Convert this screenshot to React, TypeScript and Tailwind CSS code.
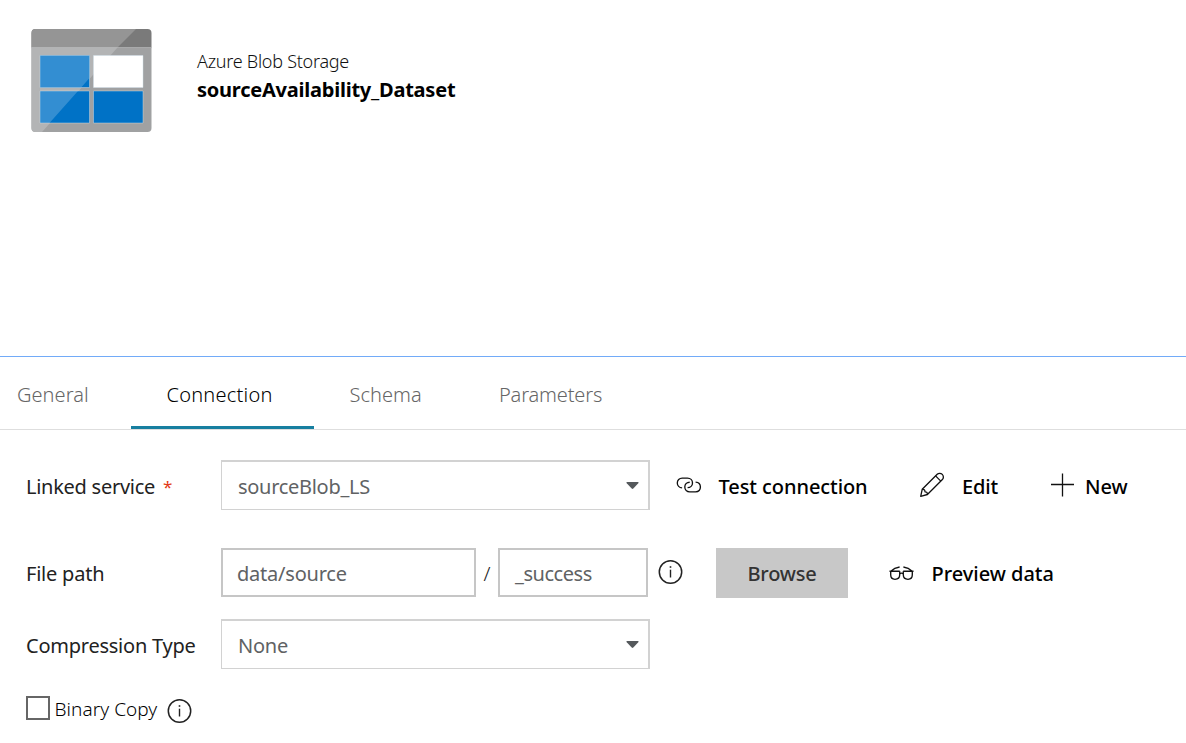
import type { ReactNode } from "react";

function StorageIcon() {
  return (
    <svg className="block h-[104px] w-[121px]" viewBox="0 0 121 104" fill="none">
      <path d="M0.5 18V4a4 4 0 0 1 4-4h112a4 4 0 0 1 4 4v14z" fill="#7a7a7a" />
      <path d="M0.5 18h120v81a4 4 0 0 1-4 4h-112a4 4 0 0 1-4-4z" fill="#a0a1a2" />
      <path d="M0.5 18.6h120" stroke="#abacad" />
      <path d="M0.5 18V4a4 4 0 0 1 4-4H105L87 18z" fill="#959595" />
      <path d="M0.5 18H87L11 103H4.5a4 4 0 0 1-4-4z" fill="#b3b4b5" />
      <g transform="translate(0 -.5)">
        <path d="M9 27h49.5v32H9zM9 62.500h49.500v32H9zM62.500 62.500h49.500v32h-49.500z" fill="#0072c6" />
        <path d="M62.500 27h49.500v32h-49.500z" fill="#fff" />
        <path d="M9 27h49.500v22.500L50.200 59H9zM9 62.500h38L18.500 94.500H9z" fill="#338ed2" />
        <path d="M9 27h49.500v32H9zM9 62.500h49.500v32H9zM62.500 62.500h49.500v32h-49.500zM62.500 27h49.500v32h-49.500z" stroke="#cfdde8" strokeOpacity=".45" />
      </g>
    </svg>
  );
}

function LinkIcon() {
  return (
    <svg className="block h-[18px] w-[26px]" viewBox="0 0 26 18" fill="none" stroke="#111" strokeWidth="1.35">
      <path d="M6.100 11.900C3.300 11.600 1.300 9.400 1.300 6.900C1.300 4.100 3.300 2.100 6.200 2.100H11.500C14.400 2.100 16.500 4.100 16.500 6.900C16.500 9.600 14.400 11.600 11.600 11.600" />
      <path d="M19.600 6.200C22.400 6.400 24.400 8.400 24.400 11C24.400 13.800 22.400 15.800 19.500 15.800H13.700C10.900 15.800 8.800 13.800 8.800 11C8.800 8.300 10.900 6.200 13.700 6.200" />
    </svg>
  );
}

function PencilIcon() {
  return (
    <svg className="block h-[26px] w-[26px]" viewBox="0 0 26 26" fill="none" stroke="#111" strokeWidth="1.3" strokeLinejoin="round">
      <path d="M.700 24.300L2.200 17.300L17.200 2.300C18.500 1 20.900 1 22.300 2.400C23.700 3.800 23.700 6.200 22.400 7.500L7.400 22.500Z" />
      <path d="M2.200 17.300C4 17.200 5 18 5 19.800C6.600 19.700 7.500 20.700 7.400 22.500M15.600 3.900L20.800 9.100" />
    </svg>
  );
}

function PlusIcon() {
  return (
    <svg className="block h-[24px] w-[24px]" viewBox="0 0 24 24" stroke="#111" strokeWidth="1.3">
      <path d="M11.500 .500V23.500M0 11.500H23" />
    </svg>
  );
}

function GlassesIcon() {
  return (
    <svg className="block h-[15px] w-[25px]" viewBox="0 0 25 15" fill="none" stroke="#111" strokeWidth="1.350">
      <path d="M.500 5.200H10.800M14.200 5.200H24.500M1.800 5.200C4.400 2.700 7 1.500 10.600 1M23.200 5.200C20.600 2.700 18 1.500 14.400 1" />
      <path d="M1.700 5.200V8.800C1.700 11.500 3.400 13.300 6 13.300C8.700 13.300 10.700 11.500 10.700 8.800V5.200M14.300 5.200V8.800C14.300 11.500 16.300 13.300 19 13.300C21.600 13.300 23.300 11.500 23.300 8.800V5.200M10.700 8C11.500 6.800 13.500 6.800 14.300 8" />
    </svg>
  );
}

function InfoIcon() {
  return (
    <svg className="block h-[25px] w-[25px]" viewBox="0 0 25 25" fill="none" stroke="#222">
      <circle cx="12.500" cy="12" r="11.200" strokeWidth="1.500" />
      <path d="M12.500 9.700V17.500" strokeWidth="1.400" />
      <path d="M12.500 6.200V7.800" strokeWidth="1.600" />
    </svg>
  );
}

function Caret() {
  return (
    <svg className="block h-[7px] w-[13px]" viewBox="0 0 13 7">
      <path d="M1 0H12Q13 .500 12.300 1.300L7.300 6.600Q6.500 7.200 5.700 6.600L.700 1.300Q0 .500 1 0Z" fill="#55595c" />
    </svg>
  );
}

function Select({ children }: { children: ReactNode }) {
  return (
    <div className="flex h-[50px] w-[429px] items-center justify-between border-t-2 border-r-2 border-b border-l border-[#d2d2d2] pr-[9px] pl-4 text-[#606264]">
      {children}
      <Caret />
    </div>
  );
}

export default function App() {
  return (
    <main className="flex h-[743px] w-[1186px] flex-col overflow-hidden bg-white font-['Noto_Sans',sans-serif] text-[20px] leading-7 whitespace-nowrap text-[#222]">
      <header className="flex h-[356px] items-start pt-[29px] pl-[31px]">
        <StorageIcon />
        <div className="ml-[45px] flex flex-col pt-[18px]">
          <span className="text-[18px] font-light tracking-[-0.26px] text-[#111]">Azure Blob Storage</span>
          <span className="mt-px font-bold tracking-[-0.23px] text-black">sourceAvailability_Dataset</span>
        </div>
      </header>

      <nav className="flex h-[74px] border-t border-t-[#72abf8] font-light text-[#666]">
        <div className="flex w-full border-b border-b-[#dedede]">
          <span className="w-[131px] pt-6 pl-[17px] tracking-[0.05px]">General</span>
          <span className="h-[72px] w-[183px] border-b-[3px] border-b-[#177fa0] pt-6 pl-[35.5px] tracking-[0.22px] text-black">Connection</span>
          <span className="w-[150px] pt-6 pl-[35.5px] tracking-[0.05px]">Schema</span>
          <span className="pt-6 pl-[35px] tracking-[-0.16px]">Parameters</span>
        </div>
      </nav>

      <section className="flex flex-col pt-[30px] pl-[26px]">
        <div className="flex h-[50px] items-center">
          <span className="flex w-[195px] pt-[3px] tracking-[-0.27px]">
            Linked service <span className="ml-[8px] text-[17px] text-[#e23a15]">*</span>
          </span>
          <Select><span className="pt-[3px] tracking-[-0.29px]">sourceBlob_LS</span></Select>
          <span className="ml-[26px] flex w-[244px] items-center font-medium text-black">
            <LinkIcon />
            <span className="ml-[16.5px] pt-[3px] tracking-[-0.07px]">Test connection</span>
          </span>
          <span className="flex w-[131px] items-center font-medium text-black">
            <PencilIcon />
            <span className="ml-4 pt-[3px] tracking-[-0.15px]">Edit</span>
          </span>
          <span className="flex items-center font-medium text-black">
            <PlusIcon />
            <span className="ml-2.5 pt-[3px] tracking-[0px]">New</span>
          </span>
        </div>

        <div className="mt-[38px] flex h-[50px] items-start">
          <span className="w-[195px] pt-3 tracking-[-0.22px]">File path</span>
          <div className="h-[49px] w-[255px] border-2 border-[#c6c6c6] pt-2.5 pl-3.5 tracking-[-0.22px] text-[#606264]">data/source</div>
          <span className="w-[22px] pt-3 text-center font-light">/</span>
          <div className="h-[49px] w-[150px] border-2 border-[#c6c6c6] pt-2.5 pl-[15px] tracking-[-0.45px] text-[#606264]">_success</div>
          <span className="mt-3 ml-2.5"><InfoIcon /></span>
          <button className="ml-[33px] h-[50px] w-[132px] bg-[#c8c8c8] pt-0.5 font-medium tracking-[-0.2px] text-[#333]">Browse</button>
          <span className="ml-[41px] flex h-[50px] items-center font-medium text-black">
            <GlassesIcon />
            <span className="ml-[17.5px] pt-px tracking-[-0.02px]">Preview data</span>
          </span>
        </div>

        <div className="mt-[21px] flex h-[50px] items-center">
          <span className="w-[195px] pt-1 tracking-[-0.24px]">Compression Type</span>
          <Select><span className="pt-[3px] tracking-[-0.25px]">None</span></Select>
        </div>

        <div className="mt-[27px] flex h-7 items-start">
          <span className="h-6 w-6 border-2 border-[#666]" />
          <span className="-mt-px ml-[4.5px] w-[108.5px] text-[19px] font-light tracking-[0.05px] text-black">Binary Copy</span>
          <span className="mt-[3px] ml-1"><InfoIcon /></span>
        </div>
      </section>
    </main>
  );
}
